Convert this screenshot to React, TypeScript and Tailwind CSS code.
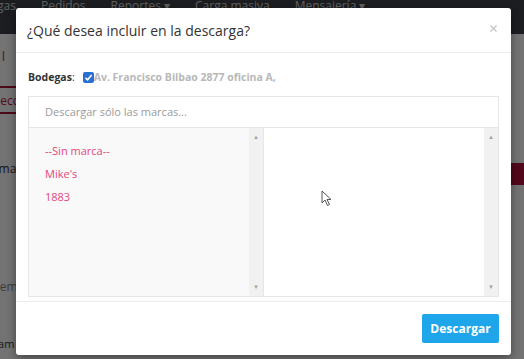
import { X } from 'lucide-react'

const marcas = ['--Sin marca--', "Mike's", '1883']

function ScrollTrack() {
  return (
    <div className="flex w-[14px] flex-col items-center justify-between bg-[#f1f1f1] py-[6px] text-[6px] leading-none text-[#a3a3a3]">
      <span>▲</span>
      <span>▼</span>
    </div>
  )
}

function BackgroundPage() {
  return (
    <div className="h-full w-full bg-white font-['Open_Sans',sans-serif]">
      <div className="flex h-[34px] items-start gap-[25px] bg-[#3c4147] text-[12px] leading-[11px] text-[#d6d6d6]">
        <span className="-ml-[32px]">Bodegas</span>
        <span>Pedidos</span>
        <span>Reportes ▾</span>
        <span>Carga masiva</span>
        <span>Mensajería ▾</span>
      </div>
      <div className="flex flex-col text-[12px] text-[#333]">
        <div className="h-[22px] pt-[14px] pl-[2px] text-[#c0143c]">l</div>
        <div className="mt-[30px] h-[2px] w-[40px] bg-[#b01235]" />
        <div className="mt-[4px] -ml-[16px] text-[#c0143c]">Selecc</div>
        <div className="mt-[2px] h-[2px] w-[40px] bg-[#b01235]" />
        <div className="mt-[46px] -ml-[12px]">Almacén</div>
        <div className="mt-[100px] -ml-[10px] text-[#888]">Elementos</div>
        <div className="mt-[40px] -ml-[8px] text-[11px]">Sam</div>
      </div>
      <div className="absolute right-0 top-[163px] h-[22px] w-[20px] bg-[#b3123a]" />
    </div>
  )
}

function Cursor() {
  return (
    <svg className="absolute left-[321px] top-[190px]" width="12" height="17" viewBox="0 0 12 17">
      <path d="M1 1 L1 13 L4 10 L6.5 15.5 L8.5 14.5 L6 9.5 L10 9.5 Z" fill="#fff" stroke="#555" strokeWidth="1" strokeLinejoin="round" />
    </svg>
  )
}

export default function App() {
  return (
    <div className="relative h-[359px] w-[524px] overflow-hidden">
      <BackgroundPage />
      <div className="absolute inset-0 bg-black/55" />

      <div className="absolute left-[16px] top-[8px] flex h-[347px] w-[495px] flex-col rounded-[3px] bg-white font-['Open_Sans',sans-serif] shadow-[0_3px_10px_rgba(0,0,0,0.4)]">
        <div className="flex h-[45px] items-center justify-between border-b border-[#ececec] pl-[11px] pr-[12px]">
          <h4 className="text-[14px] text-[#333]">¿Qué desea incluir en la descarga?</h4>
          <X className="-mt-[4px] h-[11px] w-[11px] text-[#c4c4c4]" strokeWidth={2.5} />
        </div>

        <div className="flex flex-1 flex-col px-[12px] pt-[19px]">
          <div className="flex items-center text-[10.5px] leading-none">
            <span className="font-bold text-[#333]">Bodegas</span>
            <span className="text-[#333]">:</span>
            <span className="ml-[8px] flex h-[11px] w-[11px] items-center justify-center rounded-[2px] bg-[#2a6fd6]">
              <svg width="9" height="9" viewBox="0 0 9 9">
                <path d="M1.5 4.8 L3.6 6.8 L7.6 2" fill="none" stroke="#fff" strokeWidth="1.6" />
              </svg>
            </span>
            <span className="font-bold text-[#b8b8b8]">Av. Francisco Bilbao 2877 oficina A,</span>
          </div>

          <div className="relative mt-[13px] flex flex-col">
            <div className="flex h-[32px] items-center border border-[#e6e6e6] pl-[16px] text-[11px] text-[#9a9a9a]">
              Descargar sólo las marcas...
            </div>
            <div className="flex h-[169px] border border-t-0 border-[#e6e6e6]">
              <div className="flex w-[234px] bg-[#f9f9f9]">
                <div className="flex flex-1 flex-col gap-[8px] pl-[16px] pt-[15px] text-[11px] leading-[15px] text-[#e2487c]">
                  {marcas.map((m) => (
                    <span key={m}>{m}</span>
                  ))}
                </div>
                <ScrollTrack />
              </div>
              <div className="w-px bg-[#e6e6e6]" />
              <div className="flex flex-1 bg-white">
                <div className="flex-1" />
                <ScrollTrack />
              </div>
            </div>
          </div>
        </div>

        <div className="flex h-[54px] items-start justify-end border-t border-[#ececec] pr-[12px] pt-[12px]">
          <button className="h-[29px] w-[77px] rounded-[2px] bg-[#1ea5ea] text-[12px] font-bold text-white">
            Descargar
          </button>
        </div>
      </div>

      <Cursor />
    </div>
  )
}
